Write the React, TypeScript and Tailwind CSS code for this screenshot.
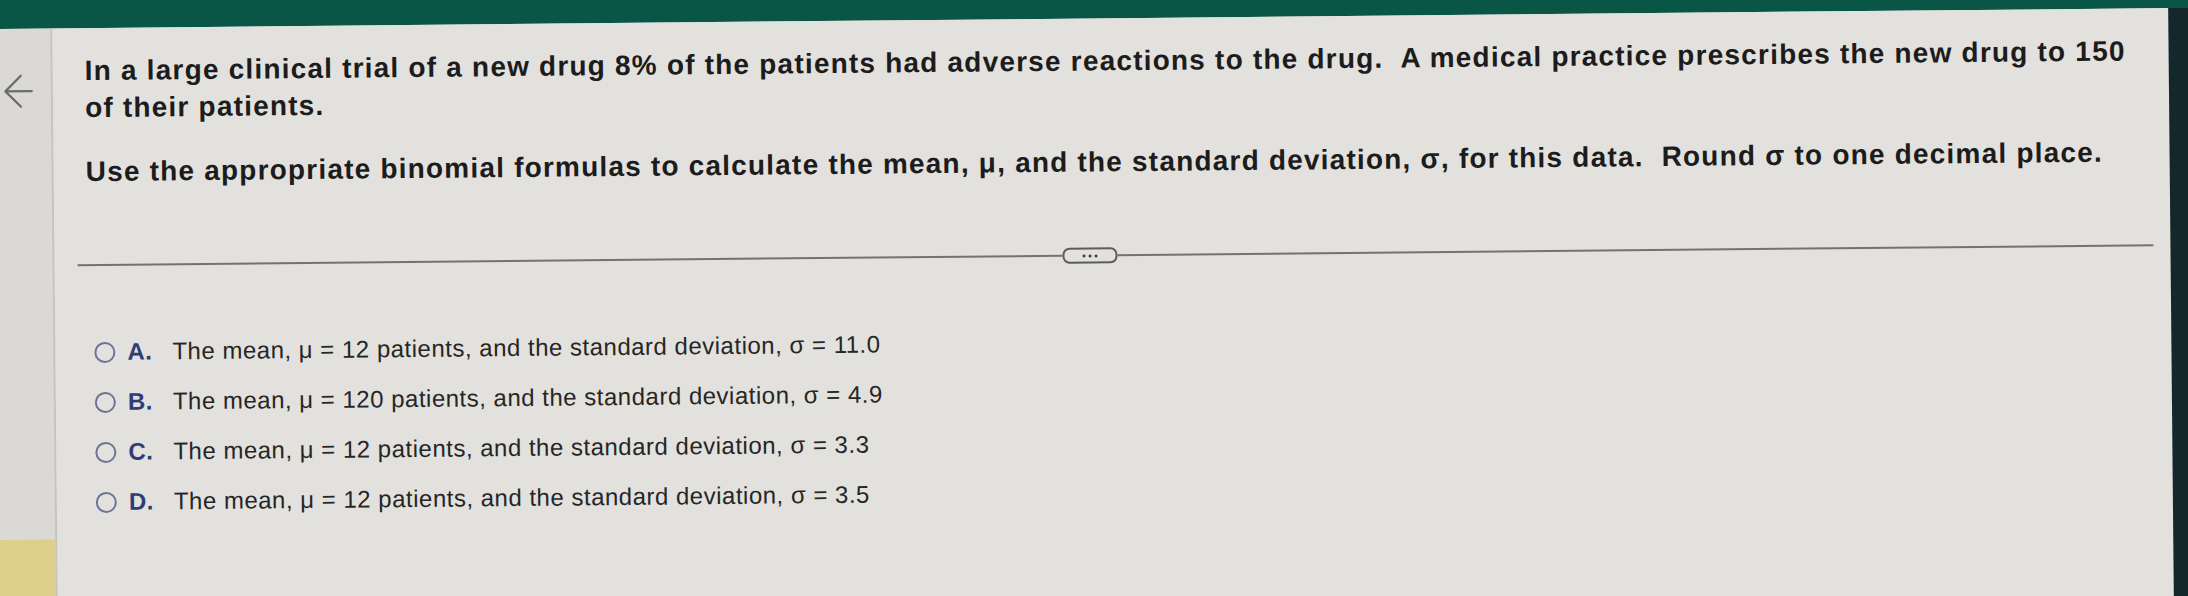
import React from 'react';

const options = [
  { letter: 'A', mean: '12', sd: '11.0' },
  { letter: 'B', mean: '120', sd: '4.9' },
  { letter: 'C', mean: '12', sd: '3.3' },
  { letter: 'D', mean: '12', sd: '3.5' },
];

function BackArrow() {
  return (
    <svg width="30" height="37" viewBox="0 0 30 37" fill="none" stroke="#6b6b6b" strokeWidth="2.2" strokeLinecap="round" strokeLinejoin="round">
      <path d="M29 18.5H2.5M18 3L2.5 18.5L18 34" />
    </svg>
  );
}

export default function App() {
  return (
    <div className="h-[596px] w-[2188px] overflow-hidden bg-[#dbd9d5] font-['Liberation_Sans',Arial,sans-serif]">
      {/* whole screen is slightly tilted in the photo */}
      <div className="-ml-[8px] flex h-[650px] w-[2250px] origin-top-left -rotate-[0.55deg] flex-col">
        <div className="h-[29px] shrink-0 bg-[#0a5646]" />

        <div className="flex flex-1">
          <aside className="flex w-[60px] shrink-0 flex-col border-r-2 border-[#c6c4c0] bg-[#dbd9d5] pt-[44px]">
            <button className="ml-[10px] w-[30px]">
              <BackArrow />
            </button>
            <div className="mt-auto h-[110px] bg-[#dfcf8c]" />
          </aside>

          <main className="flex w-[2116px] shrink-0 flex-col bg-[#e3e1dd]">
            <div className="pl-[32px] pr-[20px] pt-[24px] text-[28px] font-bold leading-[37px] tracking-[1.2px] whitespace-pre-wrap text-[#1c1c1c]">
              <p>
                {'In a large clinical trial of a new drug 8% of the patients had adverse reactions to the drug.  A medical practice prescribes the new drug to 150 of their patients.'}
              </p>
              <p className="mt-[27px]">
                {'Use the appropriate binomial formulas to calculate the mean, μ, and the standard deviation, σ, for this data.  Round σ to one decimal place.'}
              </p>
            </div>

            <div className="ml-[23px] mr-[17px] mt-[67px] flex h-[16px] items-center">
              <div className="h-[2px] w-[985px] bg-[#727272]" />
              <button className="flex h-[16px] w-[55px] items-center justify-center gap-[3px] rounded-[7px] border-2 border-[#5c5c5c]">
                <span className="h-[3px] w-[3px] rounded-full bg-[#3d3d3d]" />
                <span className="h-[3px] w-[3px] rounded-full bg-[#3d3d3d]" />
                <span className="h-[3px] w-[3px] rounded-full bg-[#3d3d3d]" />
              </button>
              <div className="h-[2px] flex-1 bg-[#727272]" />
            </div>

            <div className="mt-[54px] flex flex-col">
              {options.map((o) => (
                <label key={o.letter} className="flex h-[50px] items-center pl-[39px] text-[24px] tracking-[0.5px]">
                  <span className="h-[21px] w-[21px] shrink-0 rounded-full border-2 border-[#6a7496]" />
                  <span className="ml-[12px] w-[45px] shrink-0 font-bold text-[#2e3c78]">{o.letter}.</span>
                  <span className="text-[#262626]">
                    The mean, μ = {o.mean} patients, and the standard deviation, σ = {o.sd}
                  </span>
                </label>
              ))}
            </div>
          </main>

          <div className="flex-1 bg-[#14272b]" />
        </div>
      </div>
    </div>
  );
}
